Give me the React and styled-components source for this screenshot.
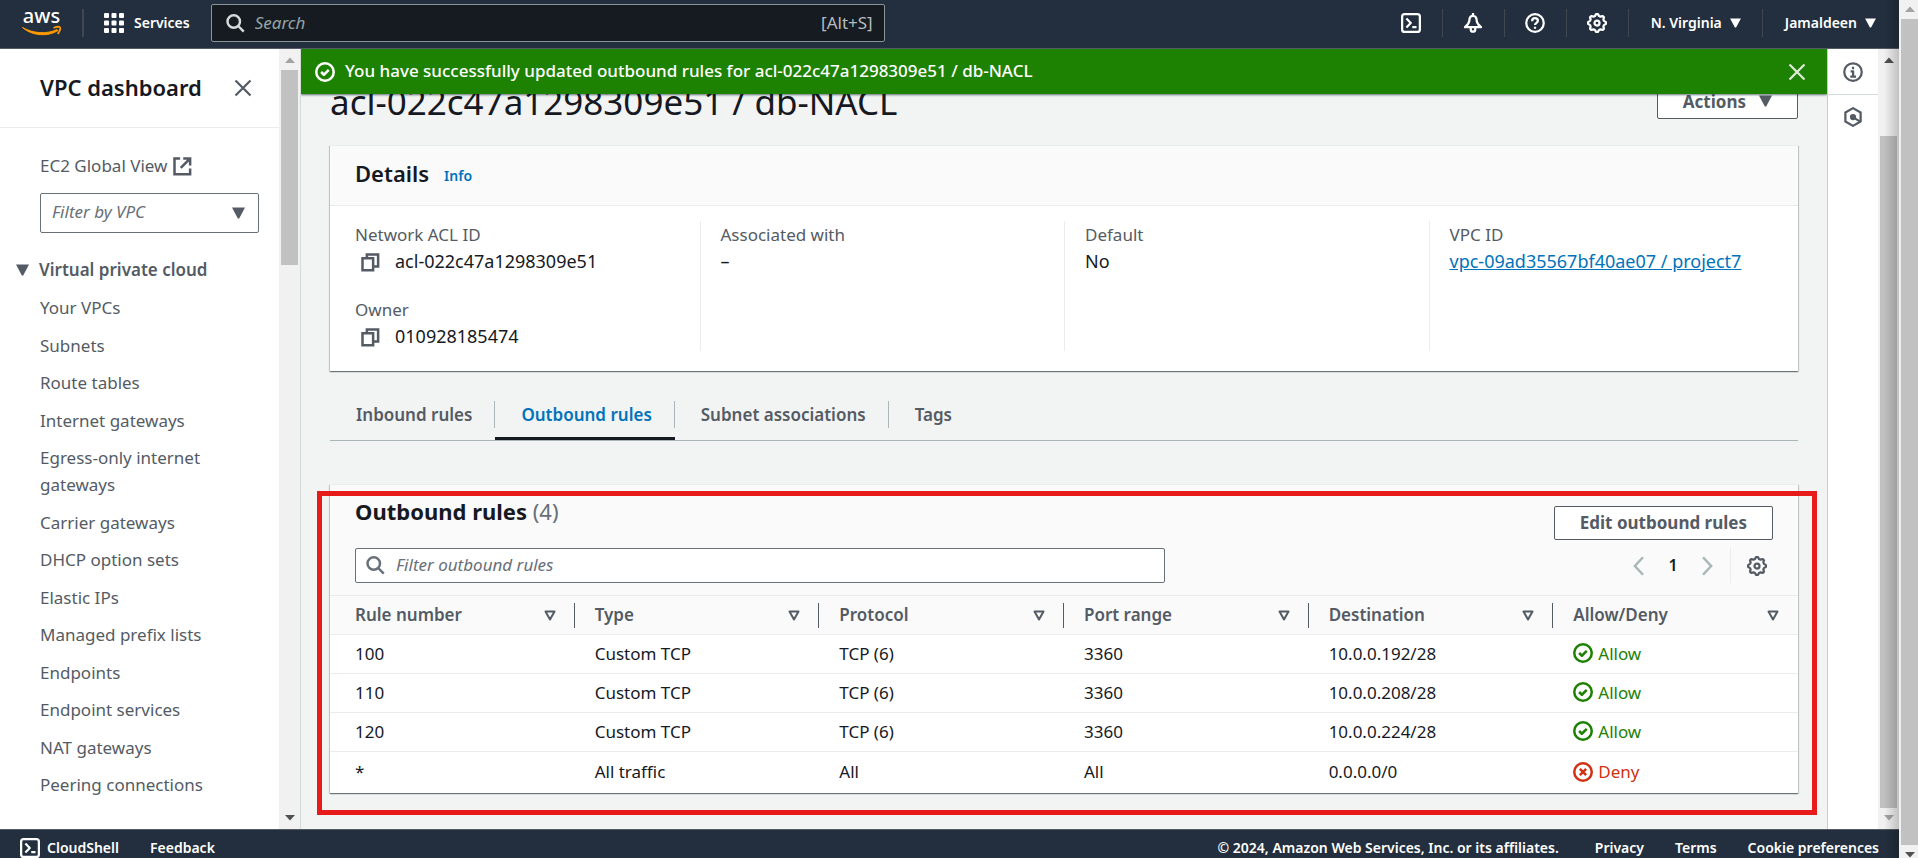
import React from 'react';
import styled, { createGlobalStyle, css } from 'styled-components';

const color = {
  nav: '#232f3e',
  text: '#16191f',
  muted: '#545b64',
  line: '#eaeded',
  link: '#0073bb',
  success: '#1d8102',
  error: '#d13212',
  page: '#f2f3f3',
  subtle: '#fafafa',
  divider: '#aab7b8',
};

const GlobalStyle = createGlobalStyle`
  *, *::before, *::after { box-sizing: border-box; }
  body {
    margin: 0;
    overflow: hidden;
    font-family: "Noto Sans", "Open Sans", sans-serif;
    font-size: 17px;
    line-height: 27px;
    color: ${color.text};
    background: ${color.page};
  }
  h1, h2, p, ul, dl, dd { margin: 0; padding: 0; }
  ul { list-style: none; }
  button, input, select { font: inherit; color: inherit; }
  button { padding: 0; border: 0; background: none; cursor: pointer; }
  a { text-decoration: none; }
  svg { display: block; flex: none; }
`;

/* ---------- Icons ---------- */

const Svg = ({ size = 20, width = 2, children }) => (
  <svg width={size} height={size} viewBox="0 0 16 16" fill="none" stroke="currentColor" strokeWidth={width} strokeLinejoin="round" aria-hidden="true">
    {children}
  </svg>
);

const CloseIcon = () => <Svg width={1.8}><path d="M2 2l12 12M14 2L2 14" /></Svg>;
const SearchIcon = () => <Svg><circle cx="7" cy="6.8" r="5" /><path d="M10.6 10.4L15 14.9" /></Svg>;
const CopyIcon = () => <Svg><path strokeLinejoin="miter" d="M2 5h8.5v9.5H2zM5.5 5V2H14.5v9.5h-4" /></Svg>;
const ExternalIcon = () => <Svg><path strokeLinejoin="miter" d="M6.5 2H2v12.5h12.5V10M9 2h5.5v5.5M14 2.5L7 9.5" /></Svg>;
const AllowIcon = () => <Svg><circle cx="8" cy="8" r="7" /><path d="M4.9 8l2.2 2.2 3.9-3.9" /></Svg>;
const DenyIcon = () => <Svg><circle cx="8" cy="8" r="7" /><path d="M5.5 5.5l5 5M10.5 5.5l-5 5" /></Svg>;
const ShellIcon = () => <Svg width={1.8}><rect x="0.9" y="0.9" width="14.2" height="14.2" rx="2" /><path d="M4.3 4.4L7.8 8l-3.5 3.6M9 11.2h3.4" /></Svg>;
const BellIcon = () => <Svg width={1.8}><path d="M8 0v2.4M8 2.2C6 2.2 5.1 3.8 5.1 5.8c0 2.6-1.6 3.8-3.5 5.5h12.8c-1.9-1.7-3.5-2.9-3.5-5.5 0-2-.9-3.600-2.900-3.600zM6.200 11.500v1.700a1.800 1.800 0 0 0 3.600 0v-1.700" /></Svg>;
const HelpIcon = () => <Svg width={1.8}><circle cx="8" cy="8" r="7" /><path d="M5.700 6.500C5.700 5 6.700 4.100 8 4.100s2.300.8 2.300 2.100c0 1.600-2.300 1.700-2.300 3.500M8 10.900v1.600" /></Svg>;
const InfoIcon = () => <Svg width={1.8}><circle cx="8" cy="8" r="7" /><path d="M8 3.700v2M6.100 7.400h2v3.900M5.800 11.600h4.600" /></Svg>;
const HexIcon = () => <Svg width={1.8}><path d="M8 .9l6.100 3.500v7.200L8 15.100 1.900 11.600V4.400z" /><circle cx="8" cy="8" r="1.600" fill="currentColor" /><path d="M8.500 8.500l5 3" /></Svg>;
const ChevronIcon = ({ right }) => <Svg><path strokeLinejoin="miter" d={right ? 'M4 1l6.500 7L4 15' : 'M12 1L5.500 8l6.500 7'} /></Svg>;

const gearPath = Array.from({ length: 32 }, (_, i) => {
  const angle = ((i - 1.5) / 32) * Math.PI * 2;
  const radius = i % 4 === 1 || i % 4 === 2 ? 7.2 : 5.8;
  return `${i ? 'L' : 'M'}${(8 + radius * Math.sin(angle)).toFixed(2)} ${(8 - radius * Math.cos(angle)).toFixed(2)}`;
}).join('') + 'z';
const GearIcon = () => <Svg width={1.8}><path d={gearPath} /><circle cx="8" cy="8" r="2" /></Svg>;

const Caret = ({ size = 13 }) => (
  <svg width={size} height={size - 1} viewBox="0 0 13 12" fill="currentColor" aria-hidden="true"><path d="M0 .5h13L7.200 11.500H5.800z" /></svg>
);
const SortIcon = () => (
  <svg width="12" height="11" viewBox="0 0 12 11" fill="none" stroke="currentColor" strokeWidth="2" strokeLinejoin="round" aria-hidden="true"><path d="M1.500 1.500h9L6 9.500z" /></svg>
);
const GridIcon = () => (
  <svg width="20" height="20" viewBox="0 0 20 20" fill="currentColor" aria-hidden="true">
    {[0, 7.5, 15].map((y) => [0, 7.5, 15].map((x) => <rect key={`${x}-${y}`} x={x} y={y} width="5" height="5" rx="1" />))}
  </svg>
);
const AwsLogo = () => (
  <svg width="40" height="46" viewBox="0 -5 40 46" role="img" aria-label="aws">
    <text x="19.500" y="18" textAnchor="middle" fontFamily="Noto Sans, sans-serif" fontSize="20" fontWeight="500" fill="#fff">aws</text>
    <path d="M.5 22.500C10 31 26 32 36 25.500l-1-1C25 29.500 11 28.500 .5 22.500z" fill="#f90" stroke="#f90" />
    <path d="M31.500 23c3-1.300 6-1.300 6.600-.4.600 1-.3 4-2.500 6.200" fill="none" stroke="#f90" strokeWidth="1.800" />
  </svg>
);

/* ---------- Top navigation ---------- */

const Window = styled.div`display: flex; height: 100vh;`;

const Page = styled.div`
  position: relative;
  flex: 1;
  min-width: 0;
  display: flex;
  flex-direction: column;
  &::after {
    content: '';
    position: absolute;
    top: 0;
    right: 0;
    bottom: 0;
    width: 15px;
    pointer-events: none;
    background: linear-gradient(to right, rgba(0, 0, 0, 0), rgba(0, 0, 0, 0.2));
  }
`;

const TopNav = styled.header`
  flex: none;
  height: 49px;
  display: flex;
  align-items: center;
  padding: 0 2px 2px 22px;
  color: #fff;
  background: ${color.nav};
  border-bottom: 1px solid #545b64;
  font-size: 14px;
  font-weight: 600;
  line-height: 20px;
`;

const Services = styled.button`
  display: flex;
  align-items: center;
  gap: 10px;
  height: 28px;
  margin-left: 20px;
  padding-left: 20px;
  border-left: 2px solid #414750;
`;

const NavSearch = styled.label`
  flex: 0 1 674px;
  display: flex;
  align-items: center;
  gap: 10px;
  height: 38px;
  margin-left: 21px;
  padding: 0 11px 0 13px;
  border: 1px solid #879596;
  border-radius: 2px;
  color: #d5dbdb;
  background: #161a21;
  font-size: 17px;
  font-weight: 400;
`;

const BareInput = styled.input`
  flex: 1;
  min-width: 0;
  padding: 0;
  border: 0;
  outline: 0;
  background: transparent;
  &::placeholder { color: ${(p) => p.$hint || '#687078'}; opacity: 1; font-style: italic; }
`;

const Shortcut = styled.span`color: #b5bcbd;`;

const NavItems = styled.div`display: flex; margin-left: auto;`;

const NavItem = styled.button`
  display: flex;
  align-items: center;
  gap: 8px;
  height: 28px;
  padding: 0 21px 0 ${(p) => (p.$labelled ? 22 : 20)}px;
  & + & { border-left: 1px solid #414750; }
`;

/* ---------- Body and scroll bars ---------- */

const Body = styled.div`flex: 1; min-height: 0; display: flex;`;

const Track = styled.div`
  flex: none;
  width: ${(p) => p.$width}px;
  display: flex;
  flex-direction: column;
  align-items: center;
  padding: ${(p) => (p.$tight ? '6px 0 0 2px' : '8px 0')};
  background: #f1f1f1;
  color: #505050;
`;
const Thumb = styled.div`
  width: 17px;
  height: ${(p) => p.$height};
  margin-top: ${(p) => p.$offset};
  background: #c1c1c1;
`;
const Arrow = styled.svg`color: ${(p) => (p.$off ? '#a3a3a3' : '#505050')}; ${(p) => p.$end && css`margin-top: auto;`}`;

const ScrollBar = ({ width = 21, tight, height, offset, atTop, atEnd }) => (
  <Track $width={width} $tight={tight} aria-hidden="true">
    <Arrow $off={atTop} width="10" height="6" viewBox="0 0 10 6" fill="currentColor"><path d="M0 6h10L5 .5z" /></Arrow>
    <Thumb $height={height} $offset={offset} />
    <Arrow $off={atEnd} $end width="10" height="6" viewBox="0 0 10 6" fill="currentColor"><path d="M0 0h10L5 5.500z" /></Arrow>
  </Track>
);

/* ---------- Side navigation ---------- */

const Sidebar = styled.aside`
  flex: none;
  width: 301px;
  display: flex;
  background: #fff;
  border-right: 1px solid #d5dbdb;
  color: ${color.muted};
`;
const SideContent = styled.div`flex: 1; display: flex; flex-direction: column;`;
const SideHeader = styled.div`
  display: flex;
  align-items: center;
  justify-content: space-between;
  height: 79px;
  padding: 0 26px 0 40px;
  border-bottom: 1px solid ${color.line};
`;
const Heading = styled.h2`
  padding-bottom: 2px;
  color: ${color.text};
  font-size: 22px;
  font-weight: ${(p) => (p.$strong ? 700 : 600)};
  line-height: 28px;
`;
const SideLink = styled.a`color: ${color.muted}; display: flex; align-items: center; gap: 5px;`;
const SideTop = styled.div`display: grid; gap: 14px; padding: 24px 20px 0 40px;`;
const SelectWrap = styled.label`position: relative; display: block;`;
const Select = styled.select`
  appearance: none;
  display: block;
  width: 100%;
  height: 40px;
  padding: 0 36px 3px 11px;
  border: 1px solid #687078;
  border-radius: 2px;
  background: #fff;
  color: #687078;
  font-style: italic;
`;
const SelectCaret = styled.span`position: absolute; right: 14px; top: 14px; pointer-events: none;`;
const SectionToggle = styled.button`
  display: flex;
  align-items: center;
  gap: 10px;
  margin-top: 23px;
  padding-left: 16px;
  font-weight: 600;
`;
const SideList = styled.ul`
  flex: 1;
  display: flex;
  flex-direction: column;
  justify-content: space-between;
  padding: 11px 20px 31px 40px;
`;

/* ---------- Main ---------- */

const Main = styled.main`flex: 1; min-width: 0; display: flex; flex-direction: column; overflow: hidden;`;

const Flash = styled.div`
  flex: none;
  position: relative;
  z-index: 1;
  display: flex;
  align-items: center;
  gap: 10px;
  height: 45px;
  padding: 0 20px 0 14px;
  color: #fff;
  background: ${color.success};
  font-weight: 500;
  box-shadow: 0 1px 2px rgba(0, 28, 36, 0.6);
`;
const FlashText = styled.p`flex: 1; padding-bottom: 2px;`;
const DismissButton = styled.button`color: #dfe9dc;`;

const Content = styled.div`padding: 0 29px;`;

const TitleRow = styled.div`
  display: flex;
  align-items: center;
  justify-content: space-between;
  height: 44px;
  margin-top: -14px;
`;
const Title = styled.h1`font-size: 35px; font-weight: 400; line-height: 44px;`;

const Button = styled.button`
  display: flex;
  align-items: center;
  gap: 13px;
  height: 34px;
  padding: 0 25px 2px;
  border: 1px solid ${color.muted};
  border-radius: 2px;
  background: #fff;
  color: ${color.muted};
  font-weight: 700;
`;

const Card = styled.section`
  position: relative;
  margin-top: ${(p) => p.$gap}px;
  background: #fff;
  border-top: 1px solid ${color.line};
  box-shadow: 0 1px 1px 0 rgba(0, 28, 36, 0.4), 1px 1px 1px 0 rgba(0, 28, 36, 0.15), -1px 1px 1px 0 rgba(0, 28, 36, 0.15);
`;

const CardHeader = styled.div`
  display: flex;
  align-items: center;
  gap: 15px;
  height: 60px;
  padding: 0 25px 4px;
  background: ${color.subtle};
  border-bottom: 1px solid ${color.line};
`;
const InfoLink = styled.a`padding-top: 4px; color: ${color.link}; font-size: 14px; font-weight: 600;`;

const Columns = styled.dl`
  display: grid;
  grid-template-columns: repeat(4, 1fr);
  padding: 15px 5px 20px;
`;
const Column = styled.div`
  display: grid;
  align-content: start;
  gap: 21px;
  min-height: 130px;
  padding: 0 9px 0 20px;
  & + & { border-left: 1px solid ${color.line}; }
`;
const Term = styled.dt`color: ${color.muted};`;
const Value = styled.dd`display: flex; align-items: center; gap: 15px; font-size: 18px;`;
const CopyButton = styled.button`margin-left: 5px; color: ${color.muted};`;
const Link = styled.a`color: ${color.link}; text-decoration: underline;`;

const Tabs = styled.div`display: flex; margin-top: 20px; border-bottom: 1px solid ${color.divider};`;
const Tab = styled.button`
  padding: 10px 0 9px;
  border-bottom: 3px solid ${(p) => (p.$active ? color.text : 'transparent')};
  color: ${(p) => (p.$active ? color.link : color.muted)};
  font-weight: 600;
`;
const TabLabel = styled.span`
  display: block;
  padding: 0 22px 0 26px;
  ${Tab}:not(:last-child) & { border-right: 1px solid ${color.divider}; }
`;

const TableTop = styled.div`display: grid; gap: 8px; padding: 12px 25px; background: ${color.subtle};`;
const TableTitle = styled.div`
  display: flex;
  justify-content: space-between;
  height: 43px;
  ${Button} { align-self: flex-end; }
`;
const Count = styled.span`color: #687078; font-weight: 400;`;
const Tools = styled.div`display: flex; align-items: center; justify-content: space-between;`;
const Filter = styled.label`
  flex: 0 1 810px;
  display: flex;
  align-items: center;
  gap: 11px;
  height: 35px;
  padding: 0 9px 2px;
  border: 1px solid #687078;
  border-radius: 2px;
  background: #fff;
  color: #687078;
`;
const Pager = styled.div`display: flex; align-items: center; color: ${color.divider};`;
const PageNumber = styled.button`width: 50px; color: ${color.text}; font-weight: 600; font-size: 16px;`;
const Preferences = styled.button`
  display: flex;
  align-items: center;
  height: 35px;
  margin-left: 12px;
  padding: 0 6px 0 16px;
  border-left: 1px solid ${color.line};
  color: ${color.muted};
`;

const Table = styled.table`
  width: 100%;
  table-layout: fixed;
  border-collapse: separate;
  border-spacing: 0;
  text-align: left;
`;
const Th = styled.th`
  height: 40px;
  padding: 0;
  background: ${color.subtle};
  border-top: 1px solid ${color.line};
  border-bottom: 1px solid ${color.line};
  color: ${color.muted};
  font-weight: 600;
`;
const ThInner = styled.div`
  display: flex;
  align-items: center;
  justify-content: space-between;
  height: 25px;
  padding: 0 18px 0 20px;
  border-right: 1px solid ${color.muted};
  ${Th}:first-child & { padding-left: 25px; }
  ${Th}:last-child & { border-right-color: transparent; }
`;
const ThText = styled.span`padding-bottom: 2px;`;
const Td = styled.td`
  height: 39px;
  padding: 0 20px 2px;
  border-bottom: 1px solid ${color.line};
  &:first-child { padding-left: 25px; }
  tr:last-child & { height: 41px; border-bottom: 0; }
`;
const Status = styled.span`
  display: flex;
  align-items: center;
  gap: 5px;
  color: ${(p) => (p.$allow ? color.success : color.error)};
`;
const Highlight = styled.div`
  position: absolute;
  inset: 6px -19px -22px -13px;
  border: 5px solid #e81b1b;
  pointer-events: none;
`;

const HelpRail = styled.aside`
  flex: none;
  width: 51px;
  background: #fff;
  border-left: 1px solid #c5cccd;
  color: ${color.muted};
`;
const RailButton = styled.button`
  display: grid;
  place-items: center;
  width: 100%;
  height: 45px;
  & + & { border-top: 1px solid #d5dbdb; }
`;

const Footer = styled.footer`
  flex: none;
  display: flex;
  gap: 31px;
  height: 29px;
  padding: 8px 20px 0;
  overflow: hidden;
  background: ${color.nav};
  border-top: 1px solid #545b64;
  color: #fff;
  font-size: 14px;
  font-weight: 600;
  line-height: 20px;
`;
const FooterButton = styled.button`display: flex; align-items: center; gap: 7px; height: 20px;`;
const FooterLink = styled.a`color: #fff;`;
const Copyright = styled.span`margin-left: auto; margin-right: 5px;`;

/* ---------- Data ---------- */

const sideLinks = [
  'Your VPCs', 'Subnets', 'Route tables', 'Internet gateways', 'Egress-only internet gateways',
  'Carrier gateways', 'DHCP option sets', 'Elastic IPs', 'Managed prefix lists', 'Endpoints',
  'Endpoint services', 'NAT gateways', 'Peering connections',
];
const tabs = ['Inbound rules', 'Outbound rules', 'Subnet associations', 'Tags'];
const headers = ['Rule number', 'Type', 'Protocol', 'Port range', 'Destination', 'Allow/Deny'];
const rules = [
  ['100', 'Custom TCP', 'TCP (6)', '3360', '10.0.0.192/28', 'Allow'],
  ['110', 'Custom TCP', 'TCP (6)', '3360', '10.0.0.208/28', 'Allow'],
  ['120', 'Custom TCP', 'TCP (6)', '3360', '10.0.0.224/28', 'Allow'],
  ['*', 'All traffic', 'All', 'All', '0.0.0.0/0', 'Deny'],
];

const Detail = ({ label, copy, children }) => (
  <div>
    <Term>{label}</Term>
    <Value>
      {copy && <CopyButton aria-label={`Copy ${label}`}><CopyIcon /></CopyButton>}
      {children}
    </Value>
  </div>
);

export default function App() {
  return (
    <Window>
      <GlobalStyle />
      <Page>
        <TopNav>
          <AwsLogo />
          <Services><GridIcon />Services</Services>
          <NavSearch>
            <SearchIcon />
            <BareInput type="text" aria-label="Search" placeholder="Search" $hint="#95a5a6" />
            <Shortcut>[Alt+S]</Shortcut>
          </NavSearch>
          <NavItems>
            <NavItem aria-label="CloudShell"><ShellIcon /></NavItem>
            <NavItem aria-label="Notifications"><BellIcon /></NavItem>
            <NavItem aria-label="Help"><HelpIcon /></NavItem>
            <NavItem aria-label="Settings"><GearIcon /></NavItem>
            <NavItem $labelled>N. Virginia<Caret size={11} /></NavItem>
            <NavItem $labelled>Jamaldeen<Caret size={11} /></NavItem>
          </NavItems>
        </TopNav>

        <Body>
          <Sidebar>
            <SideContent>
              <SideHeader>
                <Heading>VPC dashboard</Heading>
                <button aria-label="Close navigation"><CloseIcon /></button>
              </SideHeader>
              <SideTop>
                <SideLink href="#global">EC2 Global View <ExternalIcon /></SideLink>
                <SelectWrap>
                  <Select aria-label="Filter by VPC"><option>Filter by VPC</option></Select>
                  <SelectCaret><Caret /></SelectCaret>
                </SelectWrap>
              </SideTop>
              <SectionToggle aria-expanded="true"><Caret />Virtual private cloud</SectionToggle>
              <SideList>
                {sideLinks.map((item) => <li key={item}><SideLink href="#nav">{item}</SideLink></li>)}
              </SideList>
            </SideContent>
            <ScrollBar height="195px" offset="7px" atTop />
          </Sidebar>

          <Main>
            <Flash role="status">
              <AllowIcon />
              <FlashText>You have successfully updated outbound rules for acl-022c47a1298309e51 / db-NACL</FlashText>
              <DismissButton aria-label="Dismiss"><CloseIcon /></DismissButton>
            </Flash>
            <Content>
              <TitleRow>
                <Title>acl-022c47a1298309e51 / db-NACL</Title>
                <Button>Actions<Caret /></Button>
              </TitleRow>

              <Card $gap={21}>
                <CardHeader>
                  <Heading>Details</Heading>
                  <InfoLink href="#info">Info</InfoLink>
                </CardHeader>
                <Columns>
                  <Column>
                    <Detail label="Network ACL ID" copy>acl-022c47a1298309e51</Detail>
                    <Detail label="Owner" copy>010928185474</Detail>
                  </Column>
                  <Column><Detail label="Associated with">–</Detail></Column>
                  <Column><Detail label="Default">No</Detail></Column>
                  <Column><Detail label="VPC ID"><Link href="#vpc">vpc-09ad35567bf40ae07 / project7</Link></Detail></Column>
                </Columns>
              </Card>

              <Tabs role="tablist">
                {tabs.map((tab, i) => (
                  <Tab key={tab} role="tab" aria-selected={i === 1} $active={i === 1}><TabLabel>{tab}</TabLabel></Tab>
                ))}
              </Tabs>

              <Card $gap={43}>
                <TableTop>
                  <TableTitle>
                    <Heading $strong>Outbound rules <Count>(4)</Count></Heading>
                    <Button>Edit outbound rules</Button>
                  </TableTitle>
                  <Tools>
                    <Filter>
                      <SearchIcon />
                      <BareInput type="text" aria-label="Filter outbound rules" placeholder="Filter outbound rules" />
                    </Filter>
                    <Pager>
                      <button aria-label="Previous page"><ChevronIcon /></button>
                      <PageNumber>1</PageNumber>
                      <button aria-label="Next page"><ChevronIcon right /></button>
                      <Preferences aria-label="Preferences"><GearIcon /></Preferences>
                    </Pager>
                  </Tools>
                </TableTop>
                <Table>
                  <thead>
                    <tr>{headers.map((h) => <Th key={h} scope="col"><ThInner><ThText>{h}</ThText><SortIcon /></ThInner></Th>)}</tr>
                  </thead>
                  <tbody>
                    {rules.map((rule) => (
                      <tr key={rule[0]}>
                        {rule.slice(0, 5).map((cell, i) => <Td key={headers[i]}>{cell}</Td>)}
                        <Td>
                          <Status $allow={rule[5] === 'Allow'}>
                            {rule[5] === 'Allow' ? <AllowIcon /> : <DenyIcon />}{rule[5]}
                          </Status>
                        </Td>
                      </tr>
                    ))}
                  </tbody>
                </Table>
                <Highlight />
              </Card>
            </Content>
          </Main>

          <HelpRail>
            <RailButton aria-label="Info"><InfoIcon /></RailButton>
            <RailButton aria-label="Tutorials"><HexIcon /></RailButton>
          </HelpRail>
          <ScrollBar height="672px" offset="73px" atEnd />
        </Body>

        <Footer>
          <FooterButton><ShellIcon />CloudShell</FooterButton>
          <FooterLink href="#feedback">Feedback</FooterLink>
          <Copyright>© 2024, Amazon Web Services, Inc. or its affiliates.</Copyright>
          <FooterLink href="#privacy">Privacy</FooterLink>
          <FooterLink href="#terms">Terms</FooterLink>
          <FooterLink href="#cookies">Cookie preferences</FooterLink>
        </Footer>
      </Page>
      <ScrollBar width={19} tight height="calc(100vh - 32px)" offset="7px" atTop />
    </Window>
  );
}
